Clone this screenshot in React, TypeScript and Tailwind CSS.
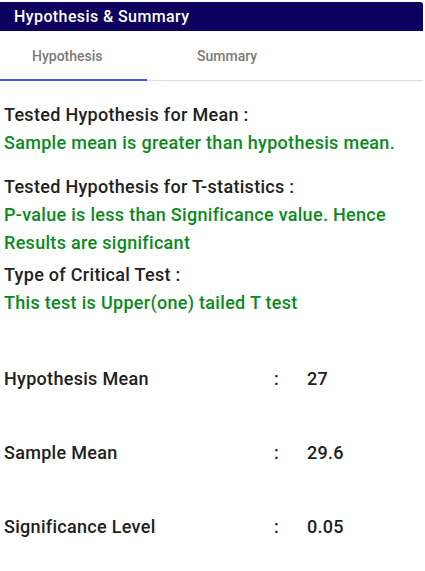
import { useState } from 'react';

const rows = [
  { label: 'Hypothesis Mean', value: '27' },
  { label: 'Sample Mean', value: '29.6' },
  { label: 'Significance Level', value: '0.05' },
];

export default function App() {
  const [tab, setTab] = useState(0);

  return (
    <div className="h-[571px] w-[425px] bg-white font-['Roboto',sans-serif] text-[#212121]">
      <div className="pt-[2px] pr-[2px]">
        <div className="flex h-[29px] items-center rounded-tr-[3px] bg-[#0d005e] pl-[14px] text-[16px] font-medium tracking-[0.4px] text-white">
          Hypothesis &amp; Summary
        </div>
      </div>

      {/* tabs */}
      <div className="mr-[2px] flex h-[50px] border-b border-[#dcdce6]">
        {['Hypothesis', 'Summary'].map((t, i) => (
          <button
            key={t}
            type="button"
            onClick={() => setTab(i)}
            className={`relative flex h-full items-center pt-[2px] text-[14px] font-medium text-[#7a7a7a] ${
              i === 0 ? 'w-[147px] pl-[32px]' : 'w-[160px] pl-[50px]'
            }`}
          >
            {t}
            {tab === i && <span className="absolute -bottom-px left-0 h-[2px] w-full bg-[#3d5afe]" />}
          </button>
        ))}
      </div>

      <div className="px-[4px] pt-[20px] text-[18px] font-medium leading-[28px] tracking-[0.3px]">
        <p>Tested Hypothesis for Mean :</p>
        <p className="text-[#0a8a1e]">Sample mean is greater than hypothesis mean.</p>

        <p className="mt-[16px]">Tested Hypothesis for T-statistics :</p>
        <p className="text-[#0a8a1e]">P-value is less than Significance value. Hence Results are significant</p>

        <p className="mt-[4px]">Type of Critical Test :</p>
        <p className="text-[#0a8a1e]">This test is Upper(one) tailed T test</p>

        <div className="mt-[48px] flex flex-col gap-[46px]">
          {rows.map((r) => (
            <div key={r.label} className="flex">
              <span className="w-[270px]">{r.label}</span>
              <span className="w-[33px]">:</span>
              <span>{r.value}</span>
            </div>
          ))}
        </div>
      </div>
    </div>
  );
}
